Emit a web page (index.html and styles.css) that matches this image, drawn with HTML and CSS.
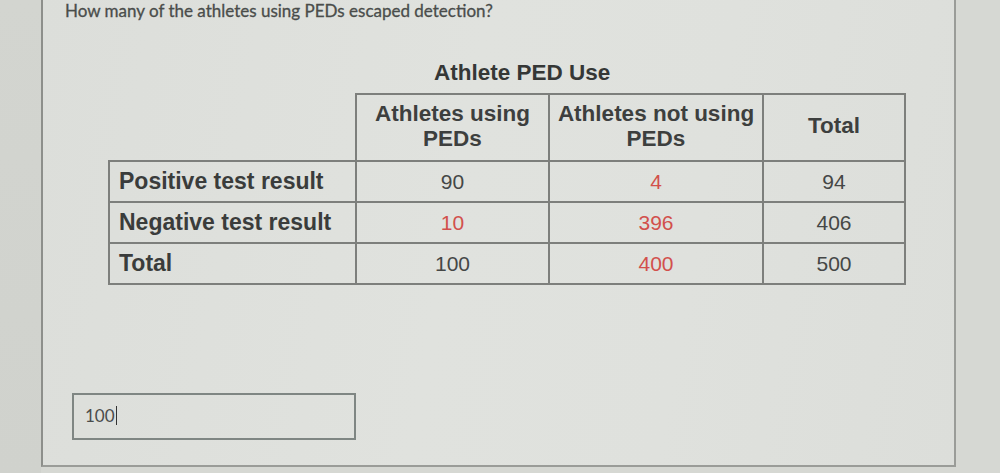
FILE: index.html
```html
<!DOCTYPE html>
<html>
<head>
<meta charset="utf-8">
<link rel="stylesheet" href="styles.css">
</head>
<body>
<div class="screen">
  <div class="gutter"></div>
  <div class="panel">
    <p class="question">How many of the athletes using PEDs escaped detection?</p>
    <div class="table-wrap">
      <table class="ped">
        <colgroup>
          <col class="c-label">
          <col class="c-using">
          <col class="c-not">
          <col class="c-total">
        </colgroup>
        <thead>
          <tr class="cap-row">
            <th class="blank"></th>
            <th class="caption" colspan="2">Athlete PED Use</th>
            <th class="blank"></th>
          </tr>
          <tr class="head-row">
            <th class="blank"></th>
            <th class="hd">Athletes using<br>PEDs</th>
            <th class="hd">Athletes not using<br>PEDs</th>
            <th class="hd">Total</th>
          </tr>
        </thead>
        <tbody>
          <tr>
            <th class="lbl">Positive test result</th>
            <td>90</td>
            <td class="red">4</td>
            <td>94</td>
          </tr>
          <tr>
            <th class="lbl">Negative test result</th>
            <td class="red">10</td>
            <td class="red">396</td>
            <td>406</td>
          </tr>
          <tr>
            <th class="lbl">Total</th>
            <td>100</td>
            <td class="red">400</td>
            <td>500</td>
          </tr>
        </tbody>
      </table>
    </div>
    <div class="answer"><span class="val">100</span><span class="caret"></span></div>
  </div>
</div>
</body>
</html>
```

FILE: styles.css
```css
html, body {
  margin: 0;
  padding: 0;
}
body {
  width: 1000px;
  height: 473px;
  overflow: hidden;
  background: #d6d8d3;
  font-family: "Liberation Sans", Arial, sans-serif;
}
.screen {
  display: flex;
  height: 473px;
}
.gutter {
  width: 41px;
  flex: none;
  background: linear-gradient(180deg, #d3d5d0, #d0d2cd);
}
.panel {
  width: 915px;
  height: 467px;
  flex: none;
  box-sizing: border-box;
  border-left: 2px solid #8d8f8b;
  border-right: 2px solid #9a9c98;
  border-bottom: 2px solid #9a9c98;
  background: linear-gradient(100deg, #dcdeda 0%, #e0e2de 45%, #dfe1dd 70%, #dcdeda 100%);
  display: flex;
  flex-direction: column;
}
.question {
  margin: 0;
  padding: 0 0 0 22px;
  font-family: Lato, "Open Sans", sans-serif;
  font-size: 17px;
  line-height: 22px;
  color: #4a4d4b;
  -webkit-text-stroke: 0.3px #4a4d4b;
}
.table-wrap {
  margin: 37px 0 0 65px;
}
.ped {
  border-collapse: collapse;
  table-layout: fixed;
  width: 796px;
  color: #3a3c3b;
}
.c-label { width: 247px; }
.c-using { width: 193px; }
.c-not { width: 214px; }
.c-total { width: 142px; }
.ped th, .ped td {
  padding: 0;
}
.caption {
  font-size: 22.5px;
  font-weight: bold;
  height: 34px;
  line-height: 28px;
  vertical-align: top;
  text-align: left;
  padding-left: 78px !important;
  color: #353736;
}
.head-row .hd {
  border: 2px solid #7d7f7c;
  height: 61px;
  font-size: 22.5px;
  font-weight: bold;
  line-height: 25px;
  text-align: center;
  vertical-align: middle;
  color: #3d3f3e;
  padding-bottom: 4px;
}
.blank {
  border: none;
}
.ped tbody th, .ped tbody td {
  border: 2px solid #7d7f7c;
  height: 39px;
  font-size: 21px;
  text-align: center;
  vertical-align: middle;
  color: #454746;
}
.ped tbody .lbl {
  text-align: left;
  padding-left: 9px;
  font-size: 23px;
  font-weight: bold;
  color: #3a3c3b;
}
.ped tbody .red {
  color: #d2504c;
}
.answer {
  margin: 108px 0 0 29px;
  width: 284px;
  height: 47px;
  box-sizing: border-box;
  border: 2px solid #7f8683;
  display: flex;
  align-items: center;
  padding-left: 11px;
  padding-bottom: 2px;
  font-family: Lato, "Open Sans", sans-serif;
  font-size: 17px;
  color: #4a4c4b;
}
.caret {
  width: 1px;
  height: 19px;
  background: #333;
  margin-left: 1px;
}
```
